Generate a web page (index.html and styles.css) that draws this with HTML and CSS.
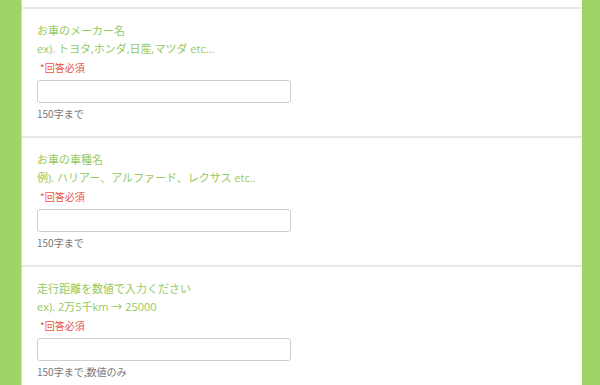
FILE: index.html
```html
<!DOCTYPE html>
<html lang="ja">
<head>
  <meta charset="UTF-8" />
  <meta name="viewport" content="width=device-width, initial-scale=1" />
  <title>お車情報フォーム</title>
  <link rel="stylesheet" href="styles.css">
</head>
<body>
  <div class="form-wrap">
    <div class="top-gap"></div>

    <div class="question">
      <div class="q-title">お車のメーカー名<br>ex). トヨタ,ホンダ,日産,マツダ etc...</div>
      <div class="required">*回答必須</div>
      <input class="q-input" type="text" maxlength="150">
      <div class="q-note">150字まで</div>
    </div>

    <div class="question">
      <div class="q-title">お車の車種名<br>例). ハリアー、アルファード、レクサス etc..</div>
      <div class="required">*回答必須</div>
      <input class="q-input" type="text" maxlength="150">
      <div class="q-note">150字まで</div>
    </div>

    <div class="question">
      <div class="q-title">走行距離を数値で入力ください<br>ex). 2万5千km → 25000</div>
      <div class="required">*回答必須</div>
      <input class="q-input" type="text" maxlength="150">
      <div class="q-note">150字まで,数値のみ</div>
    </div>
  </div>
</body>
</html>
```

FILE: styles.css
```css
html, body {
  margin: 0;
  padding: 0;
}
body {
  background: #a0d468;
  font-family: "Noto Sans CJK JP", "Noto Sans", sans-serif;
}
.form-wrap {
  margin: 0 18px 0 21px;
  background: #fff;
  border-left: 1px solid #c9e6ab;
  min-height: 385px;
}
.top-gap {
  height: 7px;
}
.question {
  border-top: 2px solid #e9e9e9;
  padding: 13px 15px 15px 15px;
}
.q-title {
  color: #94c95e;
  font-family: "Open Sans", "Noto Sans CJK JP", sans-serif;
  font-size: 11px;
  line-height: 18px;
}
.required {
  color: #e9573f;
  font-size: 10px;
  line-height: 16px;
  margin-top: 2px;
  padding-left: 3px;
}
.q-input {
  display: block;
  box-sizing: border-box;
  width: 254px;
  height: 23px;
  margin-top: 4px;
  border: 1px solid #cfcfcf;
  border-radius: 3px;
  background: #fff;
}
.q-note {
  color: #777;
  font-size: 10px;
  line-height: 14px;
  margin-top: 4px;
}
```
